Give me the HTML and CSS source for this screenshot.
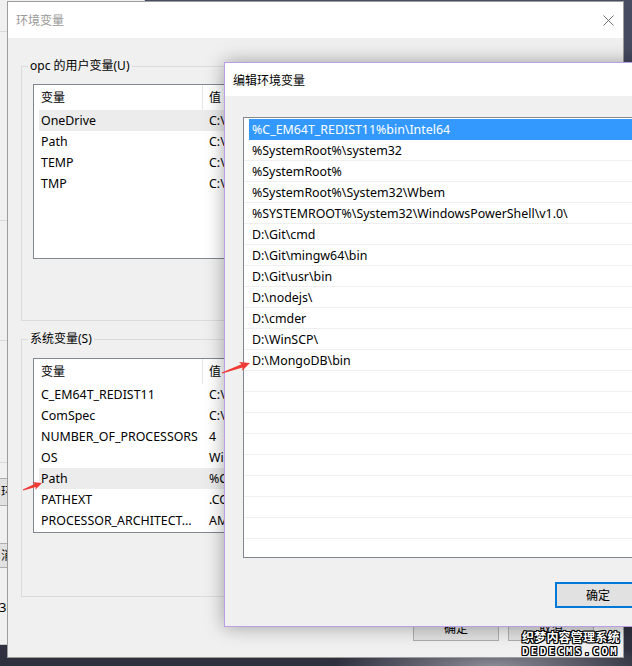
FILE: index.html
```html
<!DOCTYPE html>
<html lang="zh-CN">
<head>
<meta charset="utf-8">
<title>环境变量</title>
<link rel="stylesheet" href="styles.css">
</head>
<body>
<div class="desktop">
  <div class="win back-win">
    <div class="bw-line m1"></div>
    <div class="bw-line m2"></div>
    <div class="bw-line m3"></div>
    <div class="bw-line m4"></div>
    <div class="bw-btn b1">环境变量</div>
    <div class="bw-btn b2">消息</div>
    <div class="bw-text">30</div>
  </div>

  <div class="win main-win">
    <div class="titlebar main-title">
      <span>环境变量</span>
      <svg class="close" width="11" height="11" viewBox="0 0 11 11"><path d="M0.5 0.5L10.5 10.5M10.5 0.5L0.5 10.5" stroke="#707070" stroke-width="1" fill="none"/></svg>
    </div>
    <div class="main-body">
      <fieldset class="group g1">
        <legend>opc 的用户变量(U)</legend>
        <div class="listview">
          <div class="lv-head"><span class="c1">变量</span><span class="c2">值</span></div>
          <div class="lv-row sel"><span class="c1">OneDrive</span><span class="c2">C:\Users\opc\OneDrive</span></div>
          <div class="lv-row"><span class="c1">Path</span><span class="c2">C:\Users\opc\AppData\Local\Microsoft\WindowsApps;</span></div>
          <div class="lv-row"><span class="c1">TEMP</span><span class="c2">C:\Users\opc\AppData\Local\Temp</span></div>
          <div class="lv-row"><span class="c1">TMP</span><span class="c2">C:\Users\opc\AppData\Local\Temp</span></div>
        </div>
        <div class="btn-row">
          <button class="btn">新建(N)...</button>
          <button class="btn">编辑(E)...</button>
          <button class="btn">删除(D)</button>
        </div>
      </fieldset>
      <fieldset class="group g2">
        <legend>系统变量(S)</legend>
        <div class="listview">
          <div class="lv-head"><span class="c1">变量</span><span class="c2">值</span></div>
          <div class="lv-row"><span class="c1">C_EM64T_REDIST11</span><span class="c2">C:\Program Files (x86)\Common Files\Intel\Shared Files\cpp\</span></div>
          <div class="lv-row"><span class="c1">ComSpec</span><span class="c2">C:\Windows\system32\cmd.exe</span></div>
          <div class="lv-row"><span class="c1">NUMBER_OF_PROCESSORS</span><span class="c2">4</span></div>
          <div class="lv-row"><span class="c1">OS</span><span class="c2">Windows_NT</span></div>
          <div class="lv-row sel"><span class="c1">Path</span><span class="c2">%C_EM64T_REDIST11%bin\Intel64;%SystemRoot%\system32;</span></div>
          <div class="lv-row"><span class="c1">PATHEXT</span><span class="c2">.COM;.EXE;.BAT;.CMD;.VBS;.VBE;.JS;.JSE;.WSF;.WSH;.MSC</span></div>
          <div class="lv-row"><span class="c1">PROCESSOR_ARCHITECT...</span><span class="c2">AMD64</span></div>
        </div>
        <div class="btn-row">
          <button class="btn">新建(W)...</button>
          <button class="btn">编辑(I)...</button>
          <button class="btn">删除(L)</button>
        </div>
      </fieldset>
      <div class="dlg-btns">
        <button class="btn">确定</button>
        <button class="btn">取消</button>
      </div>
    </div>
  </div>

  <div class="win edit-win">
    <div class="titlebar edit-title"><span>编辑环境变量</span></div>
    <div class="edit-body">
      <div class="pathlist">
        <div class="pl-row sel">%C_EM64T_REDIST11%bin\Intel64</div>
        <div class="pl-row">%SystemRoot%\system32</div>
        <div class="pl-row">%SystemRoot%</div>
        <div class="pl-row">%SystemRoot%\System32\Wbem</div>
        <div class="pl-row">%SYSTEMROOT%\System32\WindowsPowerShell\v1.0\</div>
        <div class="pl-row">D:\Git\cmd</div>
        <div class="pl-row">D:\Git\mingw64\bin</div>
        <div class="pl-row">D:\Git\usr\bin</div>
        <div class="pl-row">D:\nodejs\</div>
        <div class="pl-row">D:\cmder</div>
        <div class="pl-row">D:\WinSCP\</div>
        <div class="pl-row">D:\MongoDB\bin</div>
        <div class="pl-row"></div>
        <div class="pl-row"></div>
        <div class="pl-row"></div>
        <div class="pl-row"></div>
        <div class="pl-row"></div>
        <div class="pl-row"></div>
        <div class="pl-row"></div>
        <div class="pl-row"></div>
        <div class="pl-row"></div>
      </div>
      <div class="edit-foot">
        <button class="btn default">确定</button>
        <button class="btn">取消</button>
      </div>
    </div>
  </div>

  <svg class="arrows" width="632" height="666" viewBox="0 0 632 666">
    <polygon fill="#ef3b36" transform="translate(222 373) rotate(-19.6)" points="0,-0.6 21.2,-1.7 19.8,-4.6 29.7,0 19.8,4.6 21.2,1.7 0,0.6"/>
    <polygon fill="#ef3b36" transform="translate(23 490) rotate(-20.5)" points="0,-0.6 13,-1.6 11.6,-4.2 20.3,0 11.6,4.2 13,1.6 0,0.6"/>
  </svg>

  <div class="watermark">
    <div class="wm-cn">织梦内容管理系统</div>
    <div class="wm-en">DEDECMS.COM</div>
  </div>
</div>
</body>
</html>
```

FILE: styles.css
```css
* { box-sizing: border-box; }
html, body { margin: 0; padding: 0; }
body {
  width: 632px;
  height: 666px;
  overflow: hidden;
  font-family: "Noto Sans", "Noto Sans CJK SC", sans-serif;
  font-size: 12px;
  color: #000;
}
.desktop {
  position: relative;
  width: 632px;
  height: 666px;
  overflow: hidden;
  background:
    radial-gradient(ellipse 160px 30px at 78% 100%, #8b8b96 0%, rgba(139,139,150,0) 100%),
    linear-gradient(180deg, #474c63 0%, #3d4055 55%, #2f303e 100%);
}
.win { position: absolute; display: flex; flex-direction: column; }

/* window behind */
.back-win {
  left: -140px; top: -4px; width: 285px; height: 649px;
  background: #f0f0f0; border: 1px solid #c9c9c9;
}
.bw-line { height: 1px; background: #d9d9d9; flex-shrink: 0; }
.bw-line.m1 { margin-top: 34px; }
.bw-line.m2 { margin-top: 188px; }
.bw-line.m3 { margin-top: 119px; }
.bw-line.m4 { margin-top: 121px; }
.bw-btn {
  margin-left: 128px; width: 70px; flex-shrink: 0;
  padding-left: 11px; background: #e1e1e1; border: 1px solid #adadad;
  white-space: nowrap;
}
.bw-btn.b1 { margin-top: 15px; height: 28px; line-height: 26px; }
.bw-btn.b2 { margin-top: 37px; height: 25px; line-height: 23px; }
.bw-text { margin-top: 32px; margin-left: 138px; font-size: 13px; line-height: 14px; }

/* main dialog */
.main-win {
  left: 7px; top: 1px; width: 617px; height: 657px;
  background: #f0f0f0; border: 1px solid #9d9d9d;
}
.titlebar { height: 36px; background: #fff; display: flex; align-items: center; flex-shrink: 0; white-space: nowrap; }
.main-title { padding: 0 9px 0 8px; color: #999; }
.main-title .close { margin-left: auto; }
.main-body { padding: 20px 13px 0; display: flex; flex-direction: column; }

fieldset.group {
  margin: 0; min-width: 0;
  border: 1px solid #dcdcdc;
  padding: 10px 11px 26px;
}
fieldset.g2 { margin-top: 10px; padding-bottom: 28px; }
fieldset.g2 .listview { margin-top: 1px; }
legend { padding: 0 2px; margin-left: -5px; line-height: 16px; }

.listview {
  height: 175px; border: 1px solid #828790; background: #fff; overflow: hidden;
}
.lv-head, .lv-row { display: flex; margin-left: 5px; white-space: nowrap; }
.lv-head { height: 25px; line-height: 25px; }
.lv-row { height: 21px; line-height: 21px; font-size: 12.4px; }
.c1 { width: 164px; flex-shrink: 0; padding-left: 2px; overflow: hidden; }
.lv-head .c1 { border-right: 1px solid #e5e5e5; }
.c2 { padding-left: 6px; }
.lv-row.sel { background: #ececec; }

.btn {
  width: 86px; height: 23px; padding: 0; flex-shrink: 0;
  font: inherit; color: #000;
  background: #e1e1e1; border: 1px solid #adadad;
}
.btn-row { display: flex; justify-content: flex-end; gap: 9px; margin-top: 12px; }
.dlg-btns { display: flex; justify-content: flex-end; gap: 9px; margin-top: 18px; padding-right: 16px; }
.dlg-btns .btn { height: 26px; }

/* edit dialog */
.edit-win {
  left: 224px; top: 62px; width: 470px; height: 565px;
  background: #f0f0f0; border: 1px solid #bb9fe6;
  box-shadow: 0 0 18px rgba(0, 0, 0, 0.35);
}
.edit-title { height: 33px; padding-left: 8px; }
.edit-body { padding: 21px 0 0 18px; }
.pathlist {
  width: 430px; height: 441px; padding-top: 1px;
  border: 1px solid #828790; background: #fff; overflow: hidden;
}
.pl-row {
  height: 21px; line-height: 21px; padding-left: 8px; font-size: 12.4px;
  border-bottom: 1px solid #efefef; white-space: nowrap;
}
.pl-row.sel {
  background: #3399ff; color: #fff; border-bottom-color: #3399ff;
  margin-left: 5px; padding-left: 3px;
}
.edit-foot { display: flex; gap: 9px; margin-top: 24px; padding-left: 312px; }
.edit-foot .btn { height: 26px; }
.btn.default { border: 2px solid #0078d7; }

/* annotations */
.arrows { position: absolute; left: 0; top: 0; pointer-events: none; }
.watermark {
  position: absolute; left: 522px; top: 630px; width: 102px;
  color: #fff; font-weight: bold; white-space: nowrap;
  text-shadow: -1px 0 #000, 1px 0 #000, 0 -1px #000, 0 1px #000,
               -1px -1px #000, 1px 1px #000, -1px 1px #000, 1px -1px #000;
}
.wm-cn { font-size: 12px; line-height: 15px; letter-spacing: 0.2px; }
.wm-en {
  font-family: "DejaVu Sans Mono", monospace; font-size: 10.5px; line-height: 12px;
  letter-spacing: 2.5px; margin-top: 0;
}
```
